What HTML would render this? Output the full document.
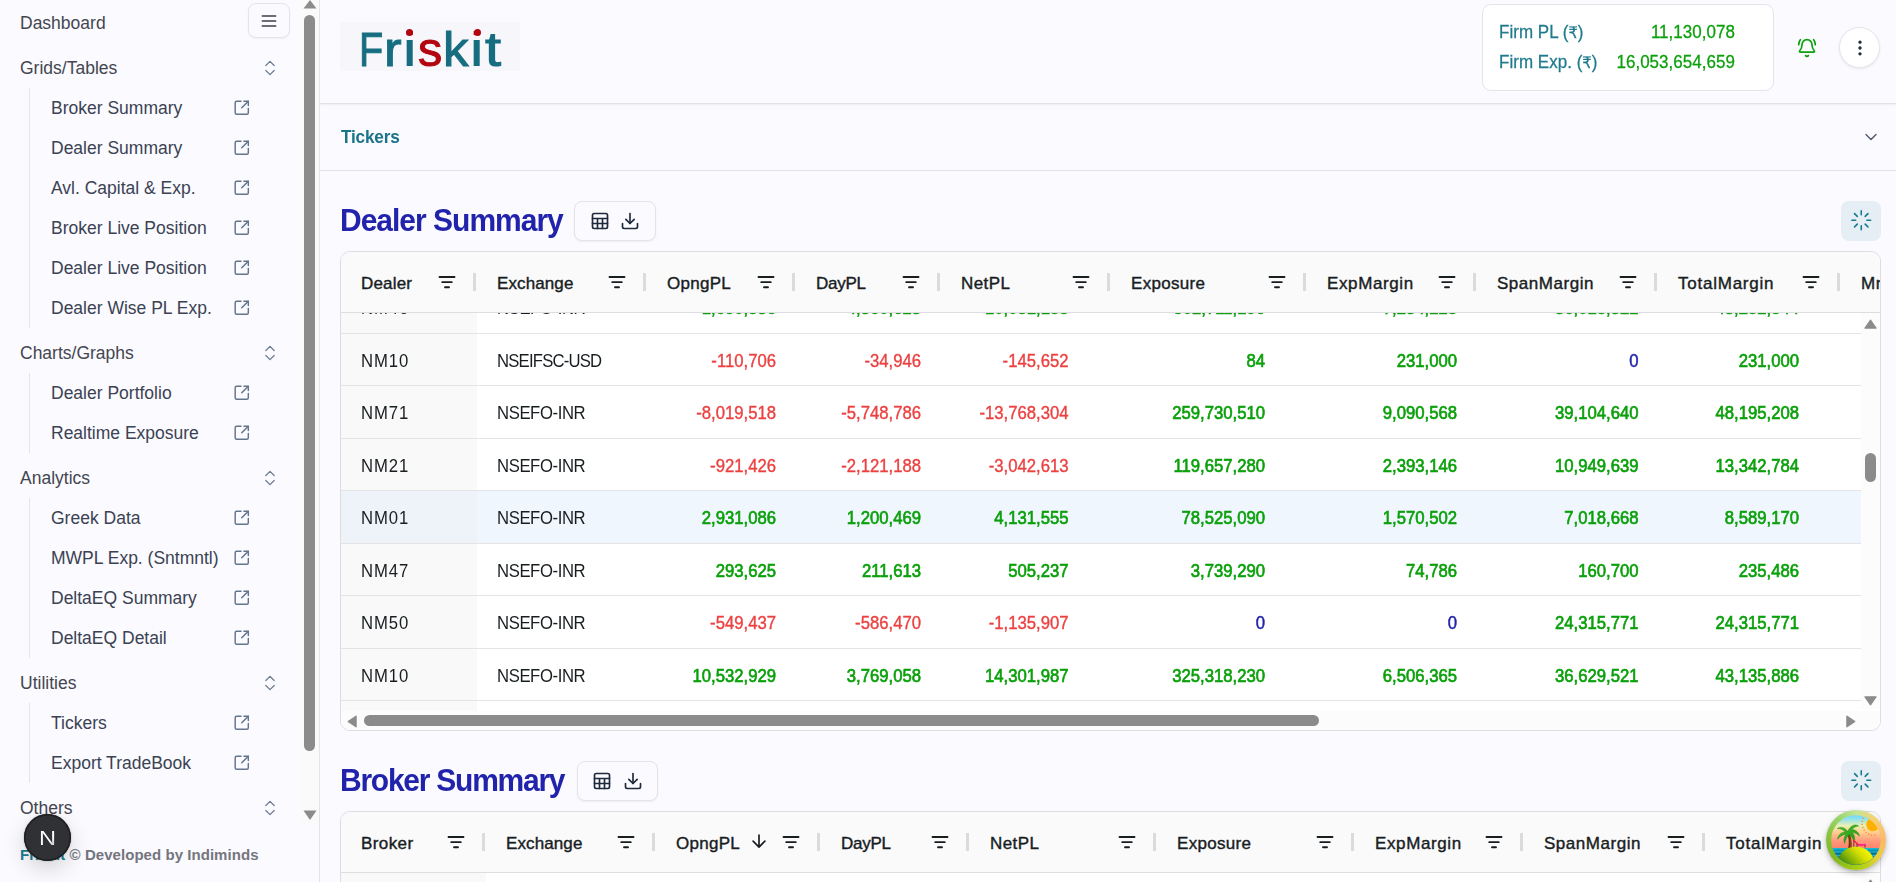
<!DOCTYPE html>
<html lang="en">
<head>
<meta charset="utf-8">
<title>Friskit</title>
<style>
html,body{margin:0;padding:0}
body{width:1896px;height:882px;overflow:hidden;position:relative;background:#fafaff;font-family:"Liberation Sans","DejaVu Sans",sans-serif;color:#333;}
.abs,.ic{position:absolute}
.ic{display:block;overflow:visible}
#sidebar{position:absolute;left:0;top:0;width:319px;height:882px;border-right:1px solid #e3e3e8;background:#fafaff}
.sb{position:absolute;white-space:nowrap;font-size:17.5px;line-height:20px;color:#3b4252}
.grp{left:20px;color:#44464f}
.itm{left:51px}
.vline{position:absolute;left:29px;width:1px;background:#e4e4ea}
#main{position:absolute;left:320px;top:0;width:1576px;height:882px;overflow:hidden}
.title{position:absolute;left:20px;font-weight:bold;font-size:30px;line-height:36px;color:#2124ab;letter-spacing:-1px;white-space:nowrap;transform:scaleY(1.07);transform-origin:50% 28px}
.btnbox{position:absolute;height:38px;border:1px solid #e3e3e9;border-radius:8px;background:#fbfbff;box-shadow:0 1px 2px rgba(0,0,0,.05)}
.ldbox{position:absolute;width:40px;height:40px;border-radius:8px;background:#e4eef4}
.grid{position:absolute;left:20px;width:1539px;border:1px solid #dddde0;border-radius:10px;background:#fff;overflow:hidden}
.ghead{position:absolute;left:0;top:0;right:0;height:60px;background:#fafafb;border-bottom:1px solid #dddde2}
.hl{position:absolute;top:2px;line-height:60px;font-size:17px;color:#181d1f;white-space:nowrap;-webkit-text-stroke:0.4px #181d1f;}
.sep{position:absolute;top:21px;width:2.6px;height:18px;background:#dbdbde;margin-left:-0.6px}
.row{position:absolute;left:0;width:1520px;height:52px;border-bottom:1px solid #e4e4e6}
.row.hi{background:#eff6fe}
.pin{position:absolute;left:0;top:0;width:136px;height:100%}
.row.hi .pin{background:#eef3f9}
.c{position:absolute;top:2px;line-height:52px;font-size:16.7px;white-space:nowrap;color:#181d1f;transform:scaleY(1.1);transform-origin:50% 31px}
.t{letter-spacing:-0.45px}
.n{text-align:right}
.g{color:#0ba00b;-webkit-text-stroke:0.6px #0ba00b}
.r{color:#ec4141;-webkit-text-stroke:0.35px #ec4141}
.z{color:#2124ab;-webkit-text-stroke:0.45px #2124ab}
.fl{font-size:17px;line-height:22px;color:#1f7a8c;white-space:nowrap;letter-spacing:0.02px;-webkit-text-stroke:0.25px #1f7a8c;transform:scaleY(1.09);transform-origin:50% 17px}
.fv{font-size:17px;line-height:22px;color:#0ba00b;white-space:nowrap;letter-spacing:0.03px;-webkit-text-stroke:0.25px #0ba00b;transform:scaleY(1.09);transform-origin:50% 17px}
.rs{font-size:.86em}
.lg{position:absolute;top:0;font-size:49px;line-height:57px;transform-origin:0 0;-webkit-text-stroke:1px;white-space:nowrap}
.li{background:linear-gradient(#b20510 0,#b20510 28%,#176d80 28%);-webkit-background-clip:text;background-clip:text;color:transparent;-webkit-text-stroke:0}
</style>
</head>
<body>

<div id="sidebar">
<div class="sb grp" style="top:13px">Dashboard</div>
<div class="abs" style="left:248px;top:3px;width:40px;height:33px;border:1px solid #e4e4ea;border-radius:8px;background:#fbfbff;box-shadow:0 1px 2px rgba(0,0,0,.05)"></div>
<svg class="ic" style="left:259px;top:10.7px;width:20px;height:20px" viewBox="0 0 24 24" fill="none" stroke="#3f3f49" stroke-width="2" stroke-linecap="round"><path d="M4 6h16M4 12h16M4 18h16"/></svg>
<div class="sb grp" style="top:58px">Grids/Tables</div>
<svg class="ic" style="left:260.00px;top:58.00px;width:20px;height:20px" viewBox="0 0 24 24" fill="none" stroke="#6a7990" stroke-width="1.45" stroke-linecap="round" stroke-linejoin="round"><path d="m7 15 5 5 5-5"/><path d="m7 9 5-5 5 5"/></svg>
<div class="vline" style="top:88px;height:240px"></div>
<div class="sb itm" style="top:98px">Broker Summary</div>
<svg class="ic" style="left:232.75px;top:99.25px;width:17.5px;height:17.5px" viewBox="0 0 24 24" fill="none" stroke="#64748b" stroke-width="2" stroke-linecap="round" stroke-linejoin="round"><path d="M21 13v6a2 2 0 0 1-2 2H5a2 2 0 0 1-2-2V5a2 2 0 0 1 2-2h6"/><path d="m21 3-9 9"/><path d="M15 3h6v6"/></svg>
<div class="sb itm" style="top:138px">Dealer Summary</div>
<svg class="ic" style="left:232.75px;top:139.25px;width:17.5px;height:17.5px" viewBox="0 0 24 24" fill="none" stroke="#64748b" stroke-width="2" stroke-linecap="round" stroke-linejoin="round"><path d="M21 13v6a2 2 0 0 1-2 2H5a2 2 0 0 1-2-2V5a2 2 0 0 1 2-2h6"/><path d="m21 3-9 9"/><path d="M15 3h6v6"/></svg>
<div class="sb itm" style="top:178px">Avl. Capital &amp; Exp.</div>
<svg class="ic" style="left:232.75px;top:179.25px;width:17.5px;height:17.5px" viewBox="0 0 24 24" fill="none" stroke="#64748b" stroke-width="2" stroke-linecap="round" stroke-linejoin="round"><path d="M21 13v6a2 2 0 0 1-2 2H5a2 2 0 0 1-2-2V5a2 2 0 0 1 2-2h6"/><path d="m21 3-9 9"/><path d="M15 3h6v6"/></svg>
<div class="sb itm" style="top:218px">Broker Live Position</div>
<svg class="ic" style="left:232.75px;top:219.25px;width:17.5px;height:17.5px" viewBox="0 0 24 24" fill="none" stroke="#64748b" stroke-width="2" stroke-linecap="round" stroke-linejoin="round"><path d="M21 13v6a2 2 0 0 1-2 2H5a2 2 0 0 1-2-2V5a2 2 0 0 1 2-2h6"/><path d="m21 3-9 9"/><path d="M15 3h6v6"/></svg>
<div class="sb itm" style="top:258px">Dealer Live Position</div>
<svg class="ic" style="left:232.75px;top:259.25px;width:17.5px;height:17.5px" viewBox="0 0 24 24" fill="none" stroke="#64748b" stroke-width="2" stroke-linecap="round" stroke-linejoin="round"><path d="M21 13v6a2 2 0 0 1-2 2H5a2 2 0 0 1-2-2V5a2 2 0 0 1 2-2h6"/><path d="m21 3-9 9"/><path d="M15 3h6v6"/></svg>
<div class="sb itm" style="top:298px">Dealer Wise PL Exp.</div>
<svg class="ic" style="left:232.75px;top:299.25px;width:17.5px;height:17.5px" viewBox="0 0 24 24" fill="none" stroke="#64748b" stroke-width="2" stroke-linecap="round" stroke-linejoin="round"><path d="M21 13v6a2 2 0 0 1-2 2H5a2 2 0 0 1-2-2V5a2 2 0 0 1 2-2h6"/><path d="m21 3-9 9"/><path d="M15 3h6v6"/></svg>
<div class="sb grp" style="top:343px">Charts/Graphs</div>
<svg class="ic" style="left:260.00px;top:343.00px;width:20px;height:20px" viewBox="0 0 24 24" fill="none" stroke="#6a7990" stroke-width="1.45" stroke-linecap="round" stroke-linejoin="round"><path d="m7 15 5 5 5-5"/><path d="m7 9 5-5 5 5"/></svg>
<div class="vline" style="top:373px;height:80px"></div>
<div class="sb itm" style="top:383px">Dealer Portfolio</div>
<svg class="ic" style="left:232.75px;top:384.25px;width:17.5px;height:17.5px" viewBox="0 0 24 24" fill="none" stroke="#64748b" stroke-width="2" stroke-linecap="round" stroke-linejoin="round"><path d="M21 13v6a2 2 0 0 1-2 2H5a2 2 0 0 1-2-2V5a2 2 0 0 1 2-2h6"/><path d="m21 3-9 9"/><path d="M15 3h6v6"/></svg>
<div class="sb itm" style="top:423px">Realtime Exposure</div>
<svg class="ic" style="left:232.75px;top:424.25px;width:17.5px;height:17.5px" viewBox="0 0 24 24" fill="none" stroke="#64748b" stroke-width="2" stroke-linecap="round" stroke-linejoin="round"><path d="M21 13v6a2 2 0 0 1-2 2H5a2 2 0 0 1-2-2V5a2 2 0 0 1 2-2h6"/><path d="m21 3-9 9"/><path d="M15 3h6v6"/></svg>
<div class="sb grp" style="top:468px">Analytics</div>
<svg class="ic" style="left:260.00px;top:468.00px;width:20px;height:20px" viewBox="0 0 24 24" fill="none" stroke="#6a7990" stroke-width="1.45" stroke-linecap="round" stroke-linejoin="round"><path d="m7 15 5 5 5-5"/><path d="m7 9 5-5 5 5"/></svg>
<div class="vline" style="top:498px;height:160px"></div>
<div class="sb itm" style="top:508px">Greek Data</div>
<svg class="ic" style="left:232.75px;top:509.25px;width:17.5px;height:17.5px" viewBox="0 0 24 24" fill="none" stroke="#64748b" stroke-width="2" stroke-linecap="round" stroke-linejoin="round"><path d="M21 13v6a2 2 0 0 1-2 2H5a2 2 0 0 1-2-2V5a2 2 0 0 1 2-2h6"/><path d="m21 3-9 9"/><path d="M15 3h6v6"/></svg>
<div class="sb itm" style="top:548px">MWPL Exp. (Sntmntl)</div>
<svg class="ic" style="left:232.75px;top:549.25px;width:17.5px;height:17.5px" viewBox="0 0 24 24" fill="none" stroke="#64748b" stroke-width="2" stroke-linecap="round" stroke-linejoin="round"><path d="M21 13v6a2 2 0 0 1-2 2H5a2 2 0 0 1-2-2V5a2 2 0 0 1 2-2h6"/><path d="m21 3-9 9"/><path d="M15 3h6v6"/></svg>
<div class="sb itm" style="top:588px">DeltaEQ Summary</div>
<svg class="ic" style="left:232.75px;top:589.25px;width:17.5px;height:17.5px" viewBox="0 0 24 24" fill="none" stroke="#64748b" stroke-width="2" stroke-linecap="round" stroke-linejoin="round"><path d="M21 13v6a2 2 0 0 1-2 2H5a2 2 0 0 1-2-2V5a2 2 0 0 1 2-2h6"/><path d="m21 3-9 9"/><path d="M15 3h6v6"/></svg>
<div class="sb itm" style="top:628px">DeltaEQ Detail</div>
<svg class="ic" style="left:232.75px;top:629.25px;width:17.5px;height:17.5px" viewBox="0 0 24 24" fill="none" stroke="#64748b" stroke-width="2" stroke-linecap="round" stroke-linejoin="round"><path d="M21 13v6a2 2 0 0 1-2 2H5a2 2 0 0 1-2-2V5a2 2 0 0 1 2-2h6"/><path d="m21 3-9 9"/><path d="M15 3h6v6"/></svg>
<div class="sb grp" style="top:673px">Utilities</div>
<svg class="ic" style="left:260.00px;top:673.00px;width:20px;height:20px" viewBox="0 0 24 24" fill="none" stroke="#6a7990" stroke-width="1.45" stroke-linecap="round" stroke-linejoin="round"><path d="m7 15 5 5 5-5"/><path d="m7 9 5-5 5 5"/></svg>
<div class="vline" style="top:703px;height:80px"></div>
<div class="sb itm" style="top:713px">Tickers</div>
<svg class="ic" style="left:232.75px;top:714.25px;width:17.5px;height:17.5px" viewBox="0 0 24 24" fill="none" stroke="#64748b" stroke-width="2" stroke-linecap="round" stroke-linejoin="round"><path d="M21 13v6a2 2 0 0 1-2 2H5a2 2 0 0 1-2-2V5a2 2 0 0 1 2-2h6"/><path d="m21 3-9 9"/><path d="M15 3h6v6"/></svg>
<div class="sb itm" style="top:753px">Export TradeBook</div>
<svg class="ic" style="left:232.75px;top:754.25px;width:17.5px;height:17.5px" viewBox="0 0 24 24" fill="none" stroke="#64748b" stroke-width="2" stroke-linecap="round" stroke-linejoin="round"><path d="M21 13v6a2 2 0 0 1-2 2H5a2 2 0 0 1-2-2V5a2 2 0 0 1 2-2h6"/><path d="m21 3-9 9"/><path d="M15 3h6v6"/></svg>
<div class="sb grp" style="top:798px">Others</div>
<svg class="ic" style="left:260.00px;top:798.00px;width:20px;height:20px" viewBox="0 0 24 24" fill="none" stroke="#6a7990" stroke-width="1.45" stroke-linecap="round" stroke-linejoin="round"><path d="m7 15 5 5 5-5"/><path d="m7 9 5-5 5 5"/></svg>
<div class="abs" style="left:300px;top:0;width:19px;height:825px;background:#fafafa"></div>
<svg class="ic" style="left:303px;top:0;width:14px;height:9px" viewBox="0 0 14 9"><path d="M7 0 L13.5 8.5 H0.5 Z" fill="#8b8b8b"/></svg>
<div class="abs" style="left:304px;top:15px;width:11px;height:736px;border-radius:6px;background:#8b8b8b"></div>
<svg class="ic" style="left:303px;top:810px;width:14px;height:10px" viewBox="0 0 14 10"><path d="M0.5 0.5 H13.5 L7 10 Z" fill="#8b8b8b"/></svg>
<div class="abs" style="left:20px;top:845px;font-size:15px;line-height:20px;font-weight:bold;letter-spacing:0.05px;white-space:nowrap;color:#75757d"><span style="color:#1b7c93">Friskit</span> © Developed by Indiminds</div>
</div>
<div id="main">
<div class="abs" style="left:0;top:0;width:1576px;height:103px;border-bottom:1px solid #e2e2e8;box-shadow:0 1px 2px rgba(0,0,0,.06)"></div>
<div class="abs" style="left:20px;top:22px;width:180px;height:49px;background:#f7f7fb"></div>
<div class="abs" id="logo" aria-label="Friskit" style="left:0;top:20.9px;width:220px;height:57px"><span class="lg" style="left:38.85px;transform:scaleX(0.8096);color:#176d80;-webkit-text-stroke-color:#176d80">F</span><span class="lg" style="left:63.93px;transform:scaleX(1.079);color:#176d80;-webkit-text-stroke-color:#176d80">r</span><span class="lg li" style="left:82.06px;transform:scaleX(1.416)">i</span><span class="lg" style="left:98.05px;transform:scaleX(0.988);color:#b20510;-webkit-text-stroke-color:#b20510">s</span><span class="lg" style="left:123.08px;transform:scaleX(1.0418);color:#176d80;-webkit-text-stroke-color:#176d80">k</span><span class="lg li" style="left:149.36px;transform:scaleX(1.416)">i</span><span class="lg" style="left:164.51px;transform:scaleX(1.184);color:#176d80;-webkit-text-stroke-color:#176d80">t</span></div>
<div class="abs" style="left:85.90px;top:28.70px;width:7.4px;height:7.4px;border-radius:50%;background:#b20510"></div>
<div class="abs" style="left:153.50px;top:28.70px;width:7.4px;height:7.4px;border-radius:50%;background:#b20510"></div>
<div class="abs" style="left:1162px;top:4px;width:290px;height:85px;border:1px solid #e4e4ea;border-radius:9px;background:#fff"></div>
<div class="abs fl" style="left:1179px;top:22px">Firm PL (<span class="rs">₹</span>)</div>
<div class="abs fl" style="left:1179px;top:52px">Firm Exp. (<span class="rs">₹</span>)</div>
<div class="abs fv" style="right:161px;top:22px">11,130,078</div>
<div class="abs fv" style="right:161px;top:52px">16,053,654,659</div>
<svg class="ic" style="left:1477px;top:37.8px;width:20px;height:20px" viewBox="0 0 24 24" fill="none" stroke="#0ba00b" stroke-width="2" stroke-linecap="round" stroke-linejoin="round"><path d="M10.268 21a2 2 0 0 0 3.464 0"/><path d="M22 8c0-2.3-.8-4.3-2-6"/><path d="M3.262 15.326A1 1 0 0 0 4 17h16a1 1 0 0 0 .74-1.673C19.41 13.956 18 12.499 18 8A6 6 0 0 0 6 8c0 4.499-1.411 5.956-2.738 7.326"/><path d="M4 2C2.8 3.7 2 5.7 2 8"/></svg>
<div class="abs" style="left:1519px;top:27px;width:39px;height:39px;border:1px solid #e6e6ea;border-radius:50%;background:#fff;box-shadow:0 1px 3px rgba(0,0,0,.08)"></div>
<svg class="ic" style="left:1530px;top:38px;width:20px;height:20px" viewBox="0 0 24 24" fill="#1e293b" stroke="#1e293b" stroke-width="2"><circle cx="12" cy="5" r="1"/><circle cx="12" cy="12" r="1"/><circle cx="12" cy="19" r="1"/></svg>
<div class="abs" style="left:0;top:104px;width:1576px;height:66px;border-bottom:1px solid #e2e2e8"></div>
<div class="abs" style="left:21px;top:126px;font-size:17.2px;line-height:22px;font-weight:bold;color:#1a7489;letter-spacing:-0.2px;transform:scaleY(1.09);transform-origin:50% 17px">Tickers</div>
<svg class="ic" style="left:1541px;top:127px;width:20px;height:20px" viewBox="0 0 24 24" fill="none" stroke="#515c6d" stroke-width="1.7" stroke-linecap="round" stroke-linejoin="round"><path d="m6 9 6 6 6-6"/></svg>
<div class="title" style="top:203px;letter-spacing:-1.0px">Dealer Summary</div>
<div class="btnbox" style="left:254px;top:201px;width:79.5px"></div>
<svg class="ic" style="left:269.50px;top:211.00px;width:20px;height:20px" viewBox="0 0 24 24" fill="none" stroke="#1e293b" stroke-width="2" stroke-linecap="round" stroke-linejoin="round"><rect width="18" height="18" x="3" y="3" rx="2"/><path d="M3 9h18M3 15h18M9 9v12M15 9v12"/></svg>
<svg class="ic" style="left:300.00px;top:211.00px;width:20px;height:20px" viewBox="0 0 24 24" fill="none" stroke="#1e293b" stroke-width="2" stroke-linecap="round" stroke-linejoin="round"><path d="M21 15v4a2 2 0 0 1-2 2H5a2 2 0 0 1-2-2v-4"/><path d="m7 10 5 5 5-5"/><path d="M12 15V3"/></svg>
<div class="ldbox" style="left:1521px;top:201px"></div>
<svg class="ic" style="left:1530.05px;top:209.05px;width:22.5px;height:22.5px" viewBox="0 0 24 24" fill="none" stroke="#1a7a90" stroke-width="1.7" stroke-linecap="round" stroke-linejoin="round"><path d="M12 2v4"/><path d="m16.2 7.8 2.9-2.9"/><path d="M18 12h4"/><path d="m16.2 16.2 2.9 2.9"/><path d="M12 18v4"/><path d="m4.9 19.1 2.9-2.9"/><path d="M2 12h4"/><path d="m4.9 4.9 2.9 2.9"/></svg>
<div class="grid" style="top:251px;height:478px">
<div class="ghead">
<div class="hl" style="left:20px;letter-spacing:0.18px">Dealer</div>
<svg class="ic" style="left:95.50px;top:20.00px;width:20px;height:20px" viewBox="0 0 16 16" fill="none" stroke="#181d1f" stroke-width="1.5" stroke-linecap="round"><path d="M2 4h12M4.2 8.1h7.6M6.4 12.2h3.2"/></svg>
<div class="sep" style="left:133px"></div>
<div class="hl" style="left:156px;letter-spacing:0.11px">Exchange</div>
<svg class="ic" style="left:265.50px;top:20.00px;width:20px;height:20px" viewBox="0 0 16 16" fill="none" stroke="#181d1f" stroke-width="1.5" stroke-linecap="round"><path d="M2 4h12M4.2 8.1h7.6M6.4 12.2h3.2"/></svg>
<div class="sep" style="left:303px"></div>
<div class="hl" style="left:326px;letter-spacing:0.28px">OpngPL</div>
<svg class="ic" style="left:414.50px;top:20.00px;width:20px;height:20px" viewBox="0 0 16 16" fill="none" stroke="#181d1f" stroke-width="1.5" stroke-linecap="round"><path d="M2 4h12M4.2 8.1h7.6M6.4 12.2h3.2"/></svg>
<div class="sep" style="left:452px"></div>
<div class="hl" style="left:475px;letter-spacing:-0.25px">DayPL</div>
<svg class="ic" style="left:559.50px;top:20.00px;width:20px;height:20px" viewBox="0 0 16 16" fill="none" stroke="#181d1f" stroke-width="1.5" stroke-linecap="round"><path d="M2 4h12M4.2 8.1h7.6M6.4 12.2h3.2"/></svg>
<div class="sep" style="left:597px"></div>
<div class="hl" style="left:620px;letter-spacing:0.42px">NetPL</div>
<svg class="ic" style="left:729.50px;top:20.00px;width:20px;height:20px" viewBox="0 0 16 16" fill="none" stroke="#181d1f" stroke-width="1.5" stroke-linecap="round"><path d="M2 4h12M4.2 8.1h7.6M6.4 12.2h3.2"/></svg>
<div class="sep" style="left:767px"></div>
<div class="hl" style="left:790px;letter-spacing:0.29px">Exposure</div>
<svg class="ic" style="left:925.50px;top:20.00px;width:20px;height:20px" viewBox="0 0 16 16" fill="none" stroke="#181d1f" stroke-width="1.5" stroke-linecap="round"><path d="M2 4h12M4.2 8.1h7.6M6.4 12.2h3.2"/></svg>
<div class="sep" style="left:963px"></div>
<div class="hl" style="left:986px;letter-spacing:0.62px">ExpMargin</div>
<svg class="ic" style="left:1095.50px;top:20.00px;width:20px;height:20px" viewBox="0 0 16 16" fill="none" stroke="#181d1f" stroke-width="1.5" stroke-linecap="round"><path d="M2 4h12M4.2 8.1h7.6M6.4 12.2h3.2"/></svg>
<div class="sep" style="left:1133px"></div>
<div class="hl" style="left:1156px;letter-spacing:0.53px">SpanMargin</div>
<svg class="ic" style="left:1276.50px;top:20.00px;width:20px;height:20px" viewBox="0 0 16 16" fill="none" stroke="#181d1f" stroke-width="1.5" stroke-linecap="round"><path d="M2 4h12M4.2 8.1h7.6M6.4 12.2h3.2"/></svg>
<div class="sep" style="left:1314px"></div>
<div class="hl" style="left:1337px;letter-spacing:0.76px">TotalMargin</div>
<svg class="ic" style="left:1459.50px;top:20.00px;width:20px;height:20px" viewBox="0 0 16 16" fill="none" stroke="#181d1f" stroke-width="1.5" stroke-linecap="round"><path d="M2 4h12M4.2 8.1h7.6M6.4 12.2h3.2"/></svg>
<div class="sep" style="left:1497px"></div>
<div class="hl" style="left:1520px;letter-spacing:0.5px">Mrgn%</div>
</div>
<div class="abs" style="left:0;top:61px;width:1520px;height:398px;overflow:hidden">
<div class="abs" style="left:0;top:0;width:136px;height:398px;background:#f9f9f9"></div>
<div class="row" style="top:-32px;height:52px">
<div class="pin"></div>
<div class="c" style="left:20px;margin-top:0px;letter-spacing:0.9px">NM46</div>
<div class="c" style="left:156px;margin-top:0px;letter-spacing:-0.4px">NSEFO-INR</div>
<div class="c n g" style="right:1085px;margin-top:0px">1,690,536</div>
<div class="c n g" style="right:940px;margin-top:0px">4,360,623</div>
<div class="c n g" style="right:792.5px;margin-top:0px">10,051,158</div>
<div class="c n g" style="right:596px;margin-top:0px">502,711,196</div>
<div class="c n g" style="right:404px;margin-top:0px">7,234,228</div>
<div class="c n g" style="right:222.5px;margin-top:0px">36,018,322</div>
<div class="c n g" style="right:62px;margin-top:0px">43,252,544</div>
</div>
<div class="row" style="top:21px;height:51px">
<div class="pin"></div>
<div class="c" style="left:20px;margin-top:0px;letter-spacing:0.9px">NM10</div>
<div class="c" style="left:156px;margin-top:0px;letter-spacing:-0.8px">NSEIFSC-USD</div>
<div class="c n r" style="right:1085px;margin-top:0px">-110,706</div>
<div class="c n r" style="right:940px;margin-top:0px">-34,946</div>
<div class="c n r" style="right:792.5px;margin-top:0px">-145,652</div>
<div class="c n g" style="right:596px;margin-top:0px">84</div>
<div class="c n g" style="right:404px;margin-top:0px">231,000</div>
<div class="c n z" style="right:222.5px;margin-top:0px">0</div>
<div class="c n g" style="right:62px;margin-top:0px">231,000</div>
</div>
<div class="row" style="top:73px;height:52px">
<div class="pin"></div>
<div class="c" style="left:20px;margin-top:0px;letter-spacing:0.9px">NM71</div>
<div class="c" style="left:156px;margin-top:0px;letter-spacing:-0.4px">NSEFO-INR</div>
<div class="c n r" style="right:1085px;margin-top:0px">-8,019,518</div>
<div class="c n r" style="right:940px;margin-top:0px">-5,748,786</div>
<div class="c n r" style="right:792.5px;margin-top:0px">-13,768,304</div>
<div class="c n g" style="right:596px;margin-top:0px">259,730,510</div>
<div class="c n g" style="right:404px;margin-top:0px">9,090,568</div>
<div class="c n g" style="right:222.5px;margin-top:0px">39,104,640</div>
<div class="c n g" style="right:62px;margin-top:0px">48,195,208</div>
</div>
<div class="row" style="top:126px;height:51px">
<div class="pin"></div>
<div class="c" style="left:20px;margin-top:0px;letter-spacing:0.9px">NM21</div>
<div class="c" style="left:156px;margin-top:0px;letter-spacing:-0.4px">NSEFO-INR</div>
<div class="c n r" style="right:1085px;margin-top:0px">-921,426</div>
<div class="c n r" style="right:940px;margin-top:0px">-2,121,188</div>
<div class="c n r" style="right:792.5px;margin-top:0px">-3,042,613</div>
<div class="c n g" style="right:596px;margin-top:0px">119,657,280</div>
<div class="c n g" style="right:404px;margin-top:0px">2,393,146</div>
<div class="c n g" style="right:222.5px;margin-top:0px">10,949,639</div>
<div class="c n g" style="right:62px;margin-top:0px">13,342,784</div>
</div>
<div class="row hi" style="top:178px;height:52px">
<div class="pin"></div>
<div class="c" style="left:20px;margin-top:0px;letter-spacing:0.9px">NM01</div>
<div class="c" style="left:156px;margin-top:0px;letter-spacing:-0.4px">NSEFO-INR</div>
<div class="c n g" style="right:1085px;margin-top:0px">2,931,086</div>
<div class="c n g" style="right:940px;margin-top:0px">1,200,469</div>
<div class="c n g" style="right:792.5px;margin-top:0px">4,131,555</div>
<div class="c n g" style="right:596px;margin-top:0px">78,525,090</div>
<div class="c n g" style="right:404px;margin-top:0px">1,570,502</div>
<div class="c n g" style="right:222.5px;margin-top:0px">7,018,668</div>
<div class="c n g" style="right:62px;margin-top:0px">8,589,170</div>
</div>
<div class="row" style="top:231px;height:51px">
<div class="pin"></div>
<div class="c" style="left:20px;margin-top:0px;letter-spacing:0.9px">NM47</div>
<div class="c" style="left:156px;margin-top:0px;letter-spacing:-0.4px">NSEFO-INR</div>
<div class="c n g" style="right:1085px;margin-top:0px">293,625</div>
<div class="c n g" style="right:940px;margin-top:0px">211,613</div>
<div class="c n g" style="right:792.5px;margin-top:0px">505,237</div>
<div class="c n g" style="right:596px;margin-top:0px">3,739,290</div>
<div class="c n g" style="right:404px;margin-top:0px">74,786</div>
<div class="c n g" style="right:222.5px;margin-top:0px">160,700</div>
<div class="c n g" style="right:62px;margin-top:0px">235,486</div>
</div>
<div class="row" style="top:283px;height:52px">
<div class="pin"></div>
<div class="c" style="left:20px;margin-top:0px;letter-spacing:0.9px">NM50</div>
<div class="c" style="left:156px;margin-top:0px;letter-spacing:-0.4px">NSEFO-INR</div>
<div class="c n r" style="right:1085px;margin-top:0px">-549,437</div>
<div class="c n r" style="right:940px;margin-top:0px">-586,470</div>
<div class="c n r" style="right:792.5px;margin-top:0px">-1,135,907</div>
<div class="c n z" style="right:596px;margin-top:0px">0</div>
<div class="c n z" style="right:404px;margin-top:0px">0</div>
<div class="c n g" style="right:222.5px;margin-top:0px">24,315,771</div>
<div class="c n g" style="right:62px;margin-top:0px">24,315,771</div>
</div>
<div class="row" style="top:336px;height:51px">
<div class="pin"></div>
<div class="c" style="left:20px;margin-top:0px;letter-spacing:0.9px">NM10</div>
<div class="c" style="left:156px;margin-top:0px;letter-spacing:-0.4px">NSEFO-INR</div>
<div class="c n g" style="right:1085px;margin-top:0px">10,532,929</div>
<div class="c n g" style="right:940px;margin-top:0px">3,769,058</div>
<div class="c n g" style="right:792.5px;margin-top:0px">14,301,987</div>
<div class="c n g" style="right:596px;margin-top:0px">325,318,230</div>
<div class="c n g" style="right:404px;margin-top:0px">6,506,365</div>
<div class="c n g" style="right:222.5px;margin-top:0px">36,629,521</div>
<div class="c n g" style="right:62px;margin-top:0px">43,135,886</div>
</div>
<div class="row" style="top:388px;height:52px">
<div class="pin"></div>
<div class="c" style="left:20px;margin-top:0px;letter-spacing:0.9px">NM35</div>
<div class="c" style="left:156px;margin-top:0px;letter-spacing:-0.4px">NSEFO-INR</div>
</div>
</div>
<div class="abs" style="left:1520px;top:61px;width:19px;height:396px;background:#fcfcfc"></div>
<svg class="ic" style="left:1523px;top:66.5px;width:13px;height:10px" viewBox="0 0 13 10"><path d="M6.5 0.8 L12.3 9.2 H0.7 Z" fill="#8b8b8b" stroke="#8b8b8b" stroke-width="1" stroke-linejoin="round"/></svg>
<div class="abs" style="left:1524px;top:201px;width:11px;height:29px;border-radius:6px;background:#8b8b8b"></div>
<svg class="ic" style="left:1523px;top:443.5px;width:13px;height:10px" viewBox="0 0 13 10"><path d="M0.7 0.8 H12.3 L6.5 9.2 Z" fill="#8b8b8b" stroke="#8b8b8b" stroke-width="1" stroke-linejoin="round"/></svg>
<div class="abs" style="left:0;top:459px;width:1539px;height:19px;background:#fcfcfc"></div>
<svg class="ic" style="left:5.5px;top:462.5px;width:10px;height:13px" viewBox="0 0 10 13"><path d="M0.8 6.5 L9.2 0.9 V12.1 Z" fill="#8b8b8b" stroke="#8b8b8b" stroke-width="1" stroke-linejoin="round"/></svg>
<div class="abs" style="left:23px;top:463px;width:955px;height:11px;border-radius:6px;background:#8b8b8b"></div>
<svg class="ic" style="left:1504.5px;top:462.5px;width:10px;height:13px" viewBox="0 0 10 13"><path d="M9.2 6.5 L0.8 0.9 V12.1 Z" fill="#8b8b8b" stroke="#8b8b8b" stroke-width="1" stroke-linejoin="round"/></svg>
</div>
<div class="title" style="top:763px;letter-spacing:-1.25px">Broker Summary</div>
<div class="btnbox" style="left:256.5px;top:761px;width:79.5px"></div>
<svg class="ic" style="left:272.00px;top:771.00px;width:20px;height:20px" viewBox="0 0 24 24" fill="none" stroke="#1e293b" stroke-width="2" stroke-linecap="round" stroke-linejoin="round"><rect width="18" height="18" x="3" y="3" rx="2"/><path d="M3 9h18M3 15h18M9 9v12M15 9v12"/></svg>
<svg class="ic" style="left:302.50px;top:771.00px;width:20px;height:20px" viewBox="0 0 24 24" fill="none" stroke="#1e293b" stroke-width="2" stroke-linecap="round" stroke-linejoin="round"><path d="M21 15v4a2 2 0 0 1-2 2H5a2 2 0 0 1-2-2v-4"/><path d="m7 10 5 5 5-5"/><path d="M12 15V3"/></svg>
<div class="ldbox" style="left:1521px;top:761px"></div>
<svg class="ic" style="left:1530.05px;top:769.05px;width:22.5px;height:22.5px" viewBox="0 0 24 24" fill="none" stroke="#1a7a90" stroke-width="1.7" stroke-linecap="round" stroke-linejoin="round"><path d="M12 2v4"/><path d="m16.2 7.8 2.9-2.9"/><path d="M18 12h4"/><path d="m16.2 16.2 2.9 2.9"/><path d="M12 18v4"/><path d="m4.9 19.1 2.9-2.9"/><path d="M2 12h4"/><path d="m4.9 4.9 2.9 2.9"/></svg>
<div class="grid" style="top:811px;height:478px">
<div class="ghead">
<div class="hl" style="left:20px;letter-spacing:0.4px">Broker</div>
<svg class="ic" style="left:104.50px;top:20.00px;width:20px;height:20px" viewBox="0 0 16 16" fill="none" stroke="#181d1f" stroke-width="1.5" stroke-linecap="round"><path d="M2 4h12M4.2 8.1h7.6M6.4 12.2h3.2"/></svg>
<div class="sep" style="left:142px"></div>
<div class="hl" style="left:165px;letter-spacing:0.11px">Exchange</div>
<svg class="ic" style="left:274.50px;top:20.00px;width:20px;height:20px" viewBox="0 0 16 16" fill="none" stroke="#181d1f" stroke-width="1.5" stroke-linecap="round"><path d="M2 4h12M4.2 8.1h7.6M6.4 12.2h3.2"/></svg>
<div class="sep" style="left:312px"></div>
<div class="hl" style="left:335px;letter-spacing:0.28px">OpngPL</div>
<svg class="ic" style="left:439.50px;top:20.00px;width:20px;height:20px" viewBox="0 0 16 16" fill="none" stroke="#181d1f" stroke-width="1.5" stroke-linecap="round"><path d="M2 4h12M4.2 8.1h7.6M6.4 12.2h3.2"/></svg>
<div class="sep" style="left:477px"></div>
<svg class="ic" style="left:407.8px;top:20px;width:20px;height:20px" viewBox="0 0 16 16" fill="none" stroke="#181d1f" stroke-width="1.35" stroke-linecap="round" stroke-linejoin="round"><path d="M8 2.4v9.6M3.3 7.35 8 12.05l4.7-4.7"/></svg>
<div class="hl" style="left:500px;letter-spacing:-0.25px">DayPL</div>
<svg class="ic" style="left:588.50px;top:20.00px;width:20px;height:20px" viewBox="0 0 16 16" fill="none" stroke="#181d1f" stroke-width="1.5" stroke-linecap="round"><path d="M2 4h12M4.2 8.1h7.6M6.4 12.2h3.2"/></svg>
<div class="sep" style="left:626px"></div>
<div class="hl" style="left:649px;letter-spacing:0.42px">NetPL</div>
<svg class="ic" style="left:775.50px;top:20.00px;width:20px;height:20px" viewBox="0 0 16 16" fill="none" stroke="#181d1f" stroke-width="1.5" stroke-linecap="round"><path d="M2 4h12M4.2 8.1h7.6M6.4 12.2h3.2"/></svg>
<div class="sep" style="left:813px"></div>
<div class="hl" style="left:836px;letter-spacing:0.29px">Exposure</div>
<svg class="ic" style="left:973.50px;top:20.00px;width:20px;height:20px" viewBox="0 0 16 16" fill="none" stroke="#181d1f" stroke-width="1.5" stroke-linecap="round"><path d="M2 4h12M4.2 8.1h7.6M6.4 12.2h3.2"/></svg>
<div class="sep" style="left:1011px"></div>
<div class="hl" style="left:1034px;letter-spacing:0.62px">ExpMargin</div>
<svg class="ic" style="left:1142.50px;top:20.00px;width:20px;height:20px" viewBox="0 0 16 16" fill="none" stroke="#181d1f" stroke-width="1.5" stroke-linecap="round"><path d="M2 4h12M4.2 8.1h7.6M6.4 12.2h3.2"/></svg>
<div class="sep" style="left:1180px"></div>
<div class="hl" style="left:1203px;letter-spacing:0.53px">SpanMargin</div>
<svg class="ic" style="left:1324.50px;top:20.00px;width:20px;height:20px" viewBox="0 0 16 16" fill="none" stroke="#181d1f" stroke-width="1.5" stroke-linecap="round"><path d="M2 4h12M4.2 8.1h7.6M6.4 12.2h3.2"/></svg>
<div class="sep" style="left:1362px"></div>
<div class="hl" style="left:1385px;letter-spacing:0.76px">TotalMargin</div>
<svg class="ic" style="left:1509.50px;top:20.00px;width:20px;height:20px" viewBox="0 0 16 16" fill="none" stroke="#181d1f" stroke-width="1.5" stroke-linecap="round"><path d="M2 4h12M4.2 8.1h7.6M6.4 12.2h3.2"/></svg>
<div class="sep" style="left:1547px"></div>
</div>
<div class="abs" style="left:0;top:61px;width:145px;height:60px;background:#f9f9f9"></div>
<div class="abs" style="left:1520px;top:61px;width:19px;height:60px;background:#fcfcfc"></div>
<svg class="ic" style="left:1523px;top:66.5px;width:13px;height:10px" viewBox="0 0 13 10"><path d="M6.5 0.8 L12.3 9.2 H0.7 Z" fill="#8b8b8b" stroke="#8b8b8b" stroke-width="1" stroke-linejoin="round"/></svg>
</div>
</div>
<div class="abs" style="left:24px;top:814px;width:47px;height:47px;border-radius:50%;background:#303134;box-shadow:0 0 0 1.5px #1f1f21 inset,0 8px 22px rgba(0,0,0,.16),0 0 2px rgba(0,0,0,.3)"></div>
<div class="abs" style="left:24px;top:815px;width:47px;height:47px;line-height:47px;text-align:center;font-size:20px;transform:scaleX(1.18);background:linear-gradient(125deg,#fff 55%,rgba(255,255,255,.1) 80%);-webkit-background-clip:text;background-clip:text;color:transparent">N</div>
<div class="abs" style="left:1826.2px;top:810.2px;width:59.8px;height:59.8px;border-radius:50%;background:conic-gradient(from 0deg,#c4e49a 0deg,#f5d272 40deg,#fbb96b 90deg,#e6cf3a 130deg,#b4d116 165deg,#9cc814 190deg,#80b622 230deg,#86c23a 275deg,#98d36a 320deg,#c4e49a 360deg);box-shadow:0 3px 6px rgba(0,0,0,.22),0 1px 2px rgba(0,0,0,.15)"></div>
<svg class="ic" style="left:1825px;top:809px;width:62px;height:62px" viewBox="0 0 62 62">
<defs>
<linearGradient id="sky" gradientUnits="userSpaceOnUse" x1="0" y1="6" x2="0" y2="39"><stop offset="0" stop-color="#6fd8f8"/><stop offset=".12" stop-color="#8fe2ee"/><stop offset=".32" stop-color="#e9f0b4"/><stop offset=".5" stop-color="#ffd294"/><stop offset=".78" stop-color="#ff9a7c"/><stop offset="1" stop-color="#ff8270"/></linearGradient>
<linearGradient id="hill" gradientUnits="userSpaceOnUse" x1="43" y1="39" x2="22" y2="59"><stop offset="0" stop-color="#fff600"/><stop offset=".35" stop-color="#d6e000"/><stop offset=".7" stop-color="#86b408"/><stop offset="1" stop-color="#3f8a0c"/></linearGradient>
<linearGradient id="leaf" x1="0" y1="0" x2="1" y2="1"><stop offset="0" stop-color="#4fc42a"/><stop offset="1" stop-color="#1f8f14"/></linearGradient>
<clipPath id="cc"><circle cx="30.9" cy="31" r="24.8"/></clipPath>
</defs>
<g clip-path="url(#cc)">
<rect x="5" y="5" width="52" height="52" fill="url(#sky)"/>
<circle cx="47.8" cy="15.6" r="6.6" fill="#ffb000"/>
<g stroke="#ff8a1a" stroke-width="1.1" stroke-linecap="butt"><path d="M38.6 9.6l-1.3-.5M37.9 12.4l-1.4-.2M37.9 15.3l-1.4.2M38.5 18.1l-1.3.6M39.8 20.7l-1.2.9M41.7 22.9l-.9 1.1M44.1 24.5l-.6 1.3M46.8 25.4l-.3 1.4M49.7 25.6l.1 1.4"/></g>
<rect x="5" y="39" width="52" height="18" fill="#12b8d2"/>
<path d="M5 41.2 Q14 39.6 22 41.2 T40 41.2 T58 41.2 V43 Q49 41.6 40 43 T22 43 T5 43Z" fill="#0a8eac"/>
<path d="M5 44.4 Q14 42.8 22 44.4 T40 44.4 T58 44.4 V46.4 Q49 45 40 46.4 T22 46.4 T5 46.4Z" fill="#0a6f92"/>
<rect x="5" y="47.5" width="52" height="10" fill="#0d5f84"/>
<path d="M23.2 39.5 C24.3 33 23.6 27.5 21.8 22.6 L23.6 21.8 C26.2 27 27.2 33 26.8 39.5 Z" fill="#8a4812"/>
<path d="M24.2 39.5 C25 33 24.5 27.5 22.8 22.6" stroke="#5e2f08" stroke-width=".8" fill="none"/>
<ellipse cx="30.9" cy="55" rx="18.6" ry="17.2" fill="url(#hill)"/>
<path d="M22.6 22.6 C20.5 18.5 15.5 17.3 12.3 19.6 C15.6 19.4 18.4 20.8 20 23 C16 23.2 13 26.4 12.6 30.2 C15 27.2 18.2 25.4 21 25.2 C18.8 28 18.4 31.4 19.6 34.4 C20.6 30.4 22.2 27.4 24.2 25.4 C26.6 27.6 28.4 30 29 33 C30.4 29.4 29.6 26.2 27.4 23.6 C30.6 23.8 32.8 25.2 34.4 27.2 C33.8 23.2 30.8 20.6 26.8 20.4 C28.8 18.4 31 17.2 33.6 17 C30 14.6 25.2 16.4 22.6 22.6 Z" fill="url(#leaf)" stroke="#23911a" stroke-width=".5"/>
<path d="M28.4 31.2 L33.6 36 L40 35.8" stroke="#ff1744" stroke-width="1.3" fill="none" stroke-linecap="round" stroke-linejoin="round"/>
<path d="M34 36 L40 35.6" stroke="#ff2d9a" stroke-width="1.5" fill="none" stroke-linecap="round"/>
<path d="M28.8 32.5 V37.6 M32 35 V38 M40 36 V38.6" stroke="#3a2a2a" stroke-width=".8" fill="none"/>
</g>
</svg>

</body></html>
